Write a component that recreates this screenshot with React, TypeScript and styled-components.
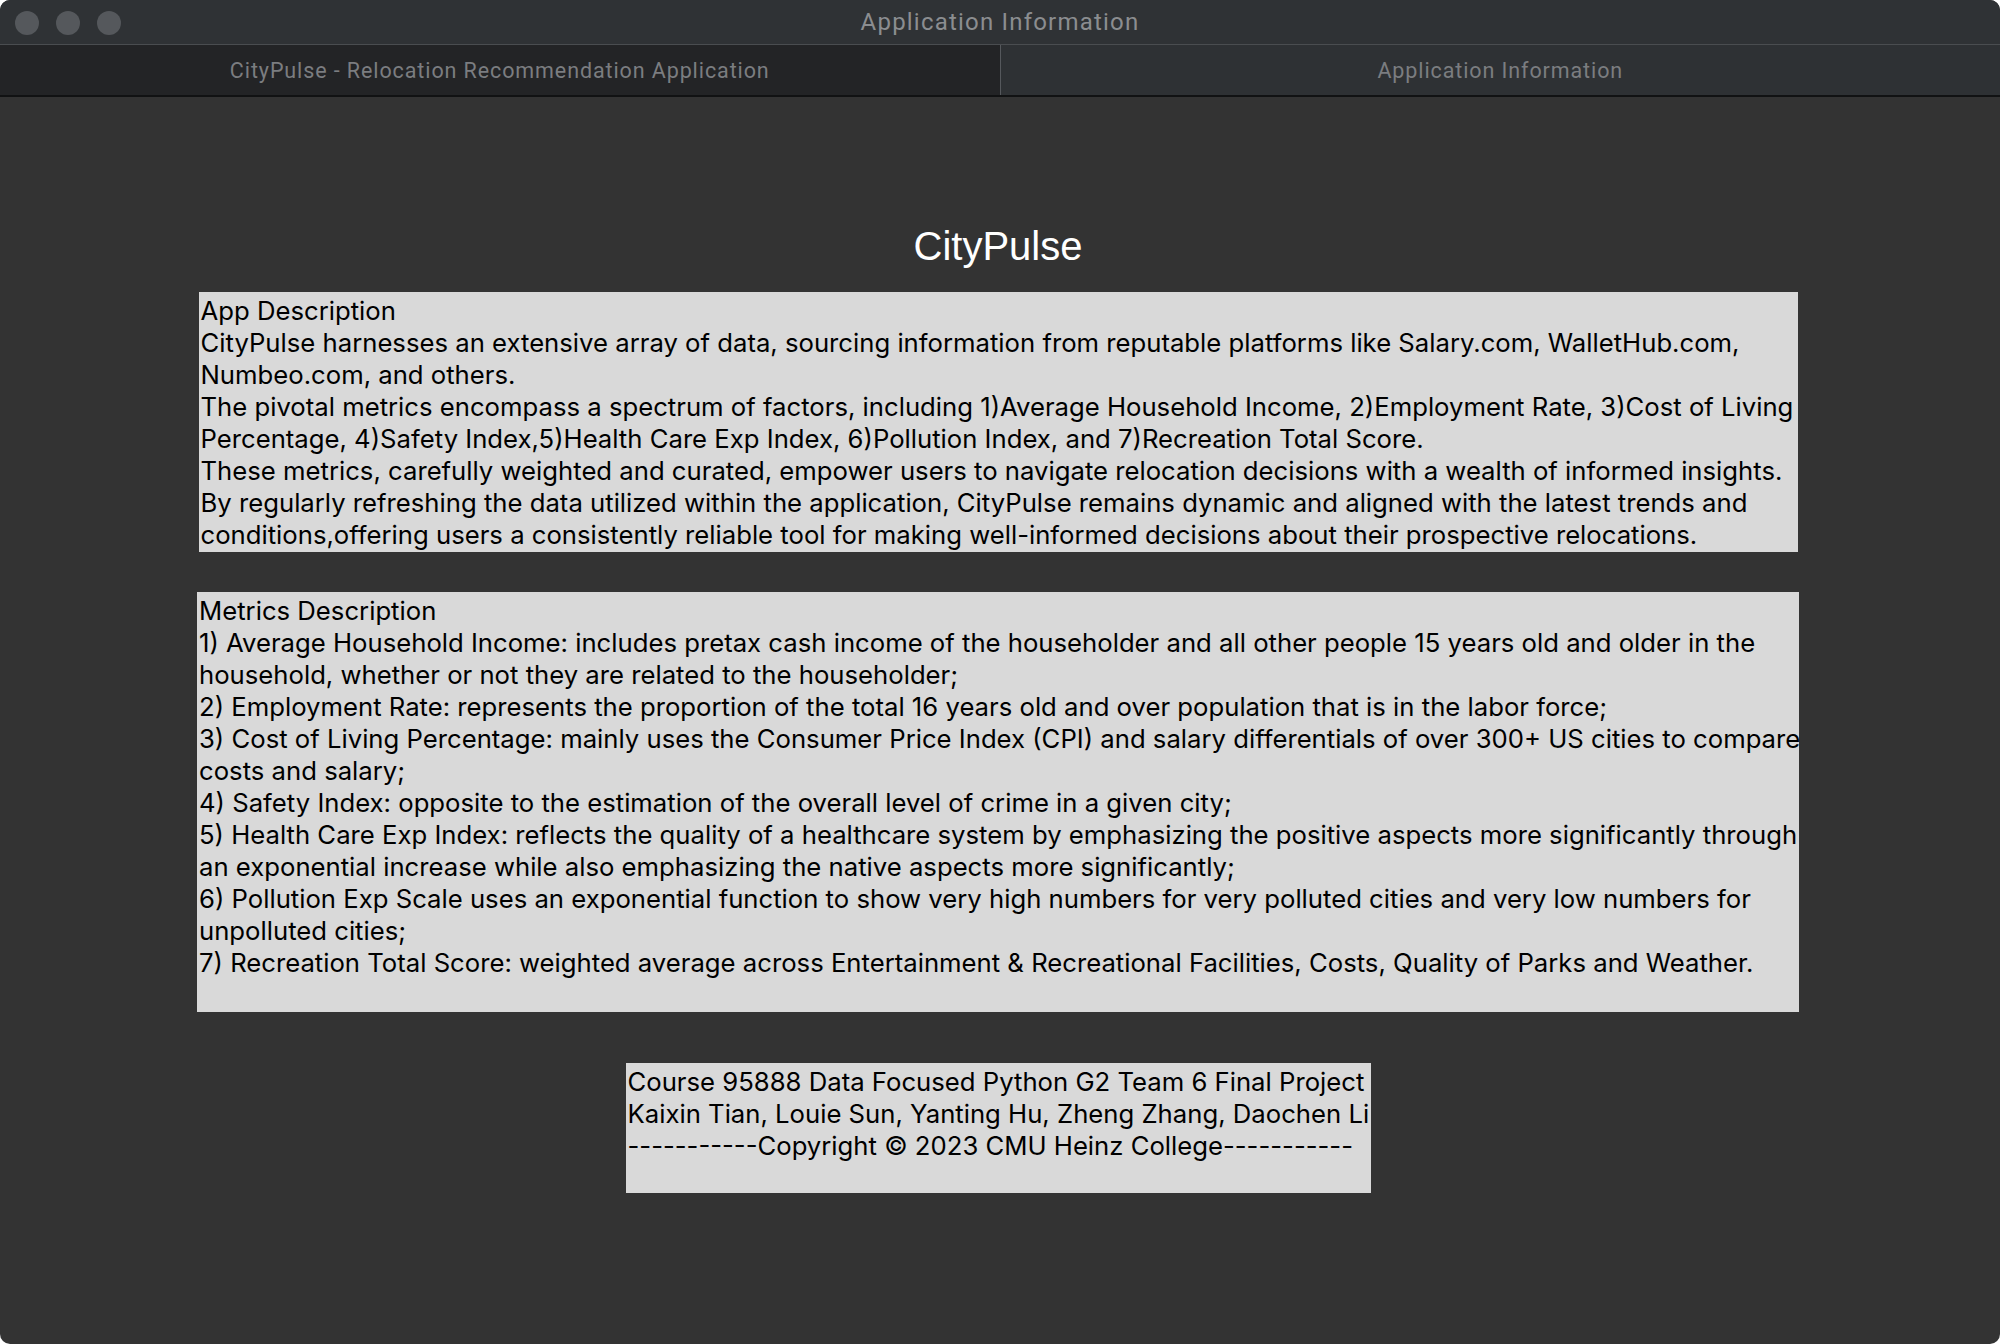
import React from 'react';
import styled, { createGlobalStyle } from 'styled-components';

const GlobalStyle = createGlobalStyle`
  html, body {
    margin: 0;
    padding: 0;
    background: #ffffff;
  }
  #root {
    width: 2000px;
    height: 1344px;
  }
`;

const Window = styled.div`
  width: 2000px;
  height: 1344px;
  display: flex;
  flex-direction: column;
  border-radius: 10px;
  overflow: hidden;
  background: #333333;
`;

const TitleBar = styled.div`
  position: relative;
  height: 44px;
  display: flex;
  align-items: center;
  justify-content: center;
  background: #2f3235;
  border-bottom: 1px solid #4a4d50;
`;

const Lights = styled.div`
  position: absolute;
  left: 15px;
  top: 11px;
  display: flex;
  gap: 17px;
`;

const Light = styled.span`
  width: 24px;
  height: 24px;
  border-radius: 50%;
  background: #55585c;
`;

const WindowTitle = styled.div`
  font-family: 'Roboto', 'Liberation Sans', sans-serif;
  font-size: 24px;
  letter-spacing: 1.2px;
  color: #8b8d90;
`;

const TabBar = styled.div`
  height: 50px;
  display: flex;
  border-bottom: 2px solid #111213;
`;

const Tab = styled.div<{ $active?: boolean }>`
  flex: 1;
  display: flex;
  align-items: center;
  justify-content: center;
  font-family: 'Roboto', 'Liberation Sans', sans-serif;
  font-size: 21.5px;
  letter-spacing: 0.9px;
  color: #7b7d80;
  background: ${({ $active }) => ($active ? '#232426' : '#2e3134')};
  & + & {
    border-left: 1px solid #55585c;
  }
`;

const Content = styled.div`
  flex: 1;
  display: flex;
  flex-direction: column;
  align-items: center;
  padding-top: 129px;
  padding-right: 4px;
`;

const Heading = styled.h1`
  margin: 0 0 26px;
  height: 40px;
  line-height: 40px;
  font-family: 'Liberation Sans', Arial, sans-serif;
  font-weight: normal;
  font-size: 40px;
  color: #ffffff;
`;

const Panel = styled.div<{ $width: number; $gap: number; $pad: number }>`
  width: ${({ $width }) => $width}px;
  box-sizing: border-box;
  margin-bottom: ${({ $gap }) => $gap}px;
  padding: 3px 2px ${({ $pad }) => $pad}px;
  background: #d9d9d9;
  color: #000000;
  font-family: 'Inter', 'Liberation Sans', sans-serif;
  font-size: 25.7px;
  line-height: 32px;
`;

const Line = styled.div`
  white-space: nowrap;
`;

const appLines = [
  'App Description',
  'CityPulse harnesses an extensive array of data, sourcing information from reputable platforms like Salary.com, WalletHub.com,',
  'Numbeo.com, and others.',
  'The pivotal metrics encompass a spectrum of factors, including 1)Average Household Income, 2)Employment Rate, 3)Cost of Living',
  'Percentage, 4)Safety Index,5)Health Care Exp Index, 6)Pollution Index, and 7)Recreation Total Score.',
  'These metrics, carefully weighted and curated, empower users to navigate relocation decisions with a wealth of informed insights.',
  'By regularly refreshing the data utilized within the application, CityPulse remains dynamic and aligned with the latest trends and',
  'conditions,offering users a consistently reliable tool for making well-informed decisions about their prospective relocations.'
];

const metricLines = [
  'Metrics Description',
  '1) Average Household Income: includes pretax cash income of the householder and all other people 15 years old and older in the',
  'household, whether or not they are related to the householder;',
  '2) Employment Rate: represents the proportion of the total 16 years old and over population that is in the labor force;',
  '3) Cost of Living Percentage: mainly uses the Consumer Price Index (CPI) and salary differentials of over 300+ US cities to compare',
  'costs and salary;',
  '4) Safety Index: opposite to the estimation of the overall level of crime in a given city;',
  '5) Health Care Exp Index: reflects the quality of a healthcare system by emphasizing the positive aspects more significantly through',
  'an exponential increase while also emphasizing the native aspects more significantly;',
  '6) Pollution Exp Scale uses an exponential function to show very high numbers for very polluted cities and very low numbers for',
  'unpolluted cities;',
  '7) Recreation Total Score: weighted average across Entertainment & Recreational Facilities, Costs, Quality of Parks and Weather.'
];

const creditLines = [
  'Course 95888 Data Focused Python G2 Team 6 Final Project',
  'Kaixin Tian, Louie Sun, Yanting Hu, Zheng Zhang, Daochen Li',
  '-----------Copyright © 2023 CMU Heinz College-----------'
];

export default function App() {
  return (
    <>
      <GlobalStyle />
      <Window>
        <TitleBar>
          <Lights>
            <Light />
            <Light />
            <Light />
          </Lights>
          <WindowTitle>Application Information</WindowTitle>
        </TitleBar>
        <TabBar>
          <Tab $active>CityPulse - Relocation Recommendation Application</Tab>
          <Tab>Application Information</Tab>
        </TabBar>
        <Content>
          <Heading>CityPulse</Heading>
          <Panel $width={1599} $gap={40} $pad={1}>
            {appLines.map((l) => (
              <Line key={l}>{l}</Line>
            ))}
          </Panel>
          <Panel $width={1602} $gap={51} $pad={33}>
            {metricLines.map((l) => (
              <Line key={l}>{l}</Line>
            ))}
          </Panel>
          <Panel $width={745} $gap={0} $pad={31}>
            {creditLines.map((l) => (
              <Line key={l}>{l}</Line>
            ))}
          </Panel>
        </Content>
      </Window>
    </>
  );
}
